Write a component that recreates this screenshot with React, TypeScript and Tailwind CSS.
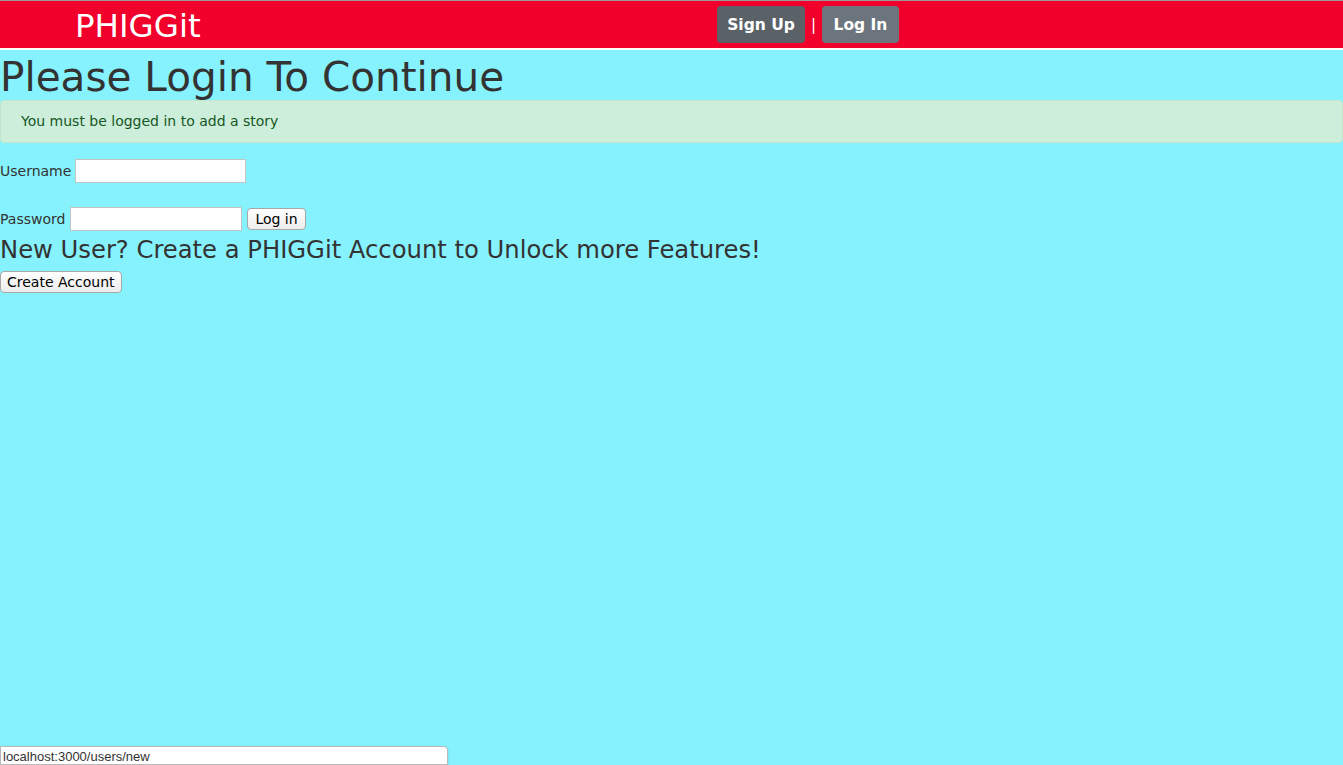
import React from 'react';

const verdana = "font-['Verdana','DejaVu_Sans',sans-serif]";

export default function App() {
  return (
    <div className={`min-h-[765px] bg-[#86f2fe] ${verdana} text-[#333] relative`}>
      <div className="h-px bg-[#9a9a9a]" />
      <header className="h-[47px] bg-[#f0002a] flex items-center border-b-2 border-white box-content">
        <div className="w-[717px] pl-[75px] pt-[3px] text-white text-[32.5px] leading-none">PHIGGit</div>
        <div className="flex items-center">
          <button className="h-[37px] w-[88px] pt-[3px] rounded bg-[#5a6268] text-white text-[15.5px] font-bold">Sign Up</button>
          <span className="w-[17px] pt-[2px] text-center text-white text-[15px]">|</span>
          <button className="h-[37px] w-[77px] pt-[3px] rounded bg-[#6c757d] text-white text-[15.5px] font-bold">Log In</button>
        </div>
      </header>

      <h1 className="h-[50px] text-[40.5px] leading-[54px] whitespace-nowrap">Please Login To Continue</h1>

      <div className="h-[43px] flex items-center px-5 bg-[#cdeedb] border border-[#c3e6cb] rounded text-[#155724] text-[14px]">
        You must be logged in to add a story
      </div>

      <form className="mt-4 text-[14px]">
        <div className="flex items-center gap-[4px] h-6">
          <label>Username</label>
          <input className="w-[171px] h-6 bg-white border border-[#c4c4c4]" />
        </div>
        <div className="flex items-center gap-[5px] mt-6 h-6">
          <label>Password</label>
          <input type="password" className="w-[172px] h-6 bg-white border border-[#c4c4c4]" />
          <button type="button" className="h-[22px] px-[7px] bg-gradient-to-b from-white to-[#ececec] border border-[#a8a8a8] rounded-sm text-black text-[14px]">
            Log in
          </button>
        </div>
      </form>

      <h2 className="mt-[6px] text-[24.25px] leading-[26px] whitespace-nowrap">
        New User? Create a PHIGGit Account to Unlock more Features!
      </h2>
      <button className="mt-[8px] h-[22px] px-[6px] bg-gradient-to-b from-white to-[#ececec] border border-[#a8a8a8] rounded-sm text-black text-[14px]">
        Create Account
      </button>

      <div className="absolute left-0 bottom-0 w-[448px] h-[19px] bg-white border border-[#b9b9b9] rounded-tr-[4px] shadow-sm pl-[2px] font-['Helvetica','Liberation_Sans',sans-serif] text-[13px] leading-[20px] text-[#333]">
        localhost:3000/users/new
      </div>
    </div>
  );
}
